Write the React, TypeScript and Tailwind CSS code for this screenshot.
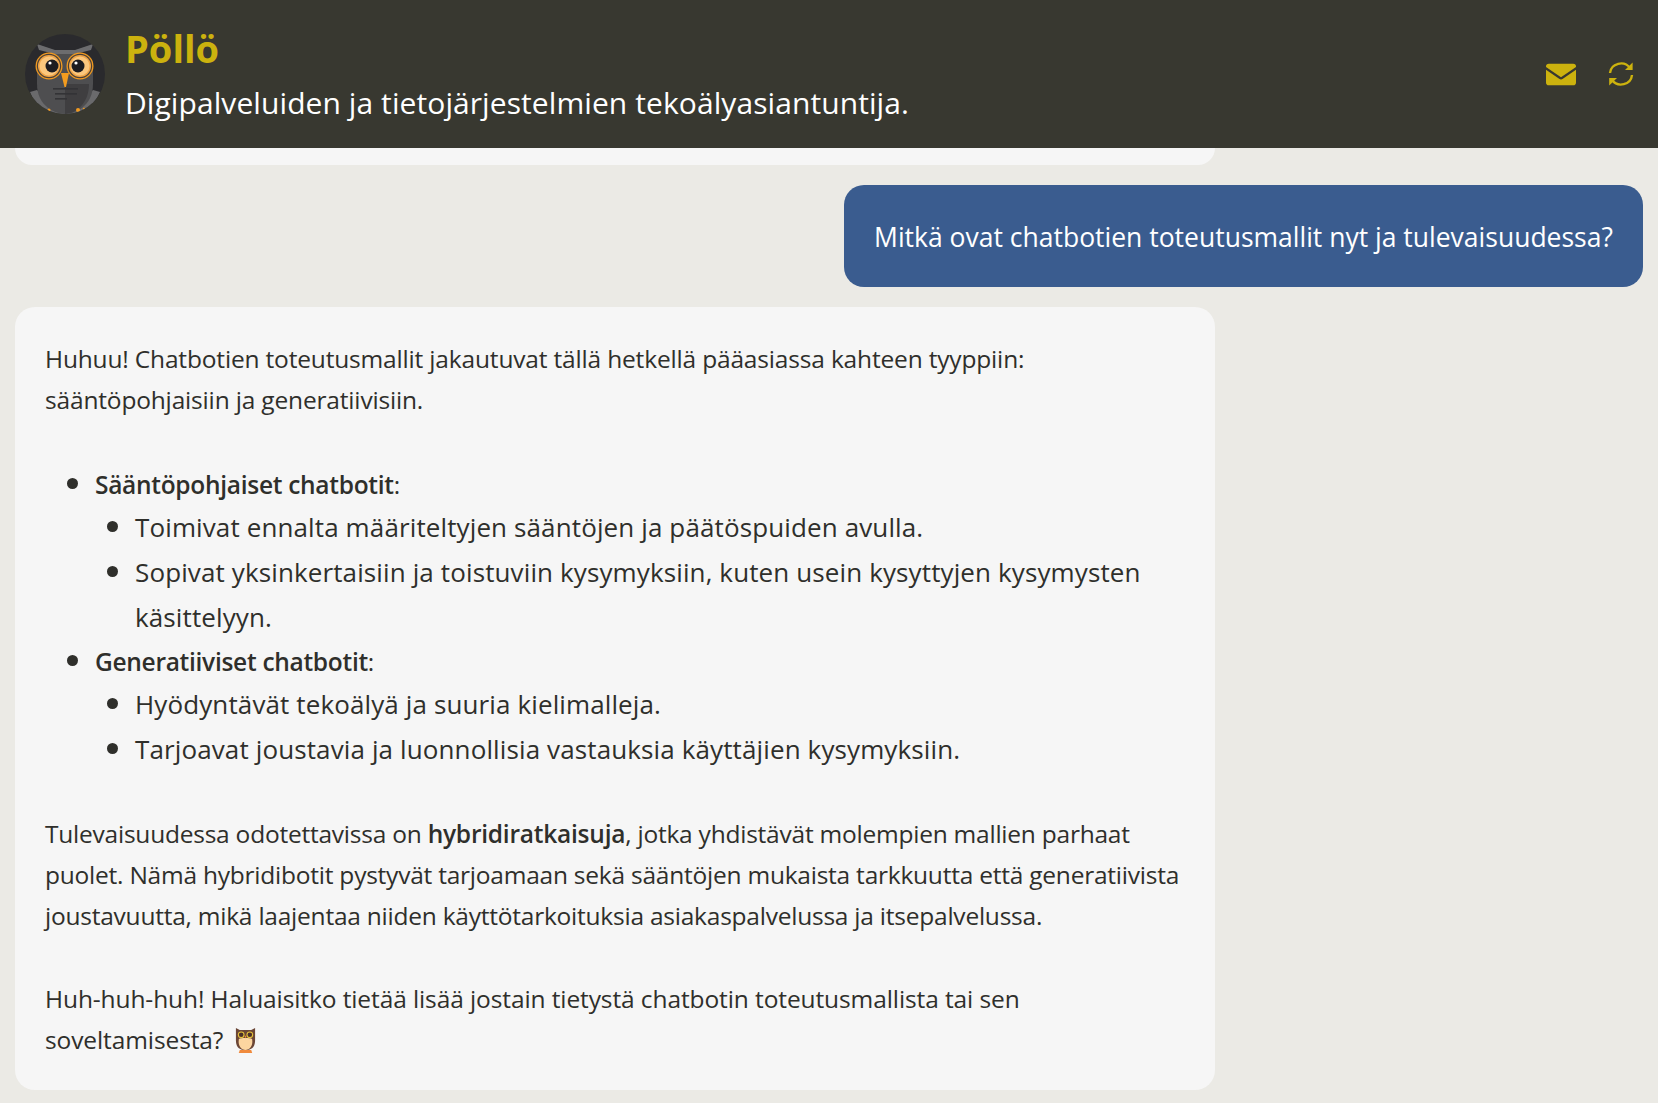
import React from "react";

const Avatar = () => (
  <svg viewBox="0 0 80 80" className="w-20 h-20 shrink-0">
    <defs>
      <clipPath id="c"><circle cx="40" cy="40" r="40" /></clipPath>
    </defs>
    <g clipPath="url(#c)">
      <rect width="80" height="80" fill="#2a2a2d" />
      <path d="M5 58 L14 78 L14 80 L66 80 L66 76 L75 58 L68 56 L60 64 L20 64 L12 56Z" fill="#6a6a6c" />
      <path d="M12 30 C12 12 68 12 68 30 L68 50 C68 72 50 80 40 80 C30 80 12 72 12 50Z" fill="#4e4e50" />
      <path d="M40 50 L64 50 C64 70 50 80 40 80Z" fill="#3f3e40" />
      <path d="M12 10 L30 16 L50 16 L68 10 L66 16 L50 20 L30 20 L14 16Z" fill="#6c6c6e" />
      <circle cx="24" cy="32" r="13.5" fill="#f29a1f" />
      <circle cx="24" cy="32" r="12.2" fill="#4a4038" />
      <circle cx="24" cy="32" r="11" fill="#f0a548" />
      <circle cx="24" cy="32" r="9.5" fill="#fbc77d" />
      <circle cx="55" cy="32" r="13.5" fill="#f29a1f" />
      <circle cx="55" cy="32" r="12.2" fill="#4a4038" />
      <circle cx="55" cy="32" r="11" fill="#f0a548" />
      <circle cx="55" cy="32" r="9.5" fill="#fbc77d" />
      <circle cx="27" cy="32" r="6.5" fill="#1d1c20" />
      <circle cx="53" cy="32" r="6.5" fill="#1d1c20" />
      <circle cx="25" cy="29" r="1.6" fill="#fff" />
      <circle cx="51" cy="29" r="1.6" fill="#fff" />
      <path d="M36 39 L44 39 L41 53 L39.5 53Z" fill="#f39c1f" />
      <rect x="28" y="54" width="25" height="1.6" fill="#333336" />
      <rect x="30" y="59" width="22" height="1.6" fill="#333336" />
      <rect x="30" y="64" width="12" height="1.6" fill="#333336" />
      <circle cx="24" cy="76" r="1.5" fill="#f29a1f" />
      <circle cx="53" cy="76" r="2" fill="#f29a1f" />
      <circle cx="59" cy="75" r="1.2" fill="#f29a1f" />
    </g>
  </svg>
);

const Mail = () => (
  <svg viewBox="0 0 32 24" className="w-[30px] h-[23px]">
    <path d="M3 0.5 H29 A3 3 0 0 1 32 3.5 V4 L16 15 L0 4 V3.5 A3 3 0 0 1 3 0.5Z" fill="#ccb20e" />
    <path d="M0 7 L14 16.5 Q16 18 18 16.5 L32 7 V20.5 A3 3 0 0 1 29 23.5 H3 A3 3 0 0 1 0 20.5Z" fill="#ccb20e" />
  </svg>
);

const Refresh = () => (
  <svg viewBox="0 0 26 26" className="w-[26px] h-[26px]" fill="none" stroke="#ccb20e" strokeWidth="2.4">
    <path d="M2 12 A11 10.5 0 0 1 22 7" />
    <path d="M24 14 A11 10.5 0 0 1 4 19" />
    <path d="M24.6 1.5 V9 H17 Z" fill="#ccb20e" stroke="none" />
    <path d="M1.2 24.5 V17 H9 Z" fill="#ccb20e" stroke="none" />
  </svg>
);

const OwlEmoji = () => (
  <svg viewBox="0 0 24 28" className="inline-block w-[23px] h-[27px] align-[-5px] ml-[11px]">
    <path d="M2 1 L6 3 H18 L22 1 L22 14 C22 22 17 24 12 24 C7 24 2 22 2 14Z" fill="#6b4636" />
    <path d="M5 13 C5 11 19 11 19 13 C20 20 16 24 12 24 C8 24 4 20 5 13Z" fill="#fdd6a0" />
    <circle cx="7.5" cy="8" r="3.5" fill="#e8c33a" />
    <circle cx="16.5" cy="8" r="3.5" fill="#e8c33a" />
    <circle cx="7.5" cy="8" r="2.4" fill="#4b3029" />
    <circle cx="16.5" cy="8" r="2.4" fill="#4b3029" />
    <path d="M11 9 H13 L12 12Z" fill="#f08a3c" />
    <path d="M6 24 H18 L19 27 H5Z" fill="#f08a3c" />
  </svg>
);

const Top = ({ title, items }: { title: string; items: string[] }) => (
  <li className="list-disc marker:text-[30px] text-[24.5px] leading-[37.5px] tracking-[-0.29px] not-first:mt-[2px]">
    <div>
      <strong className="font-semibold">{title}</strong>:
    </div>
    <ul className="pl-[40px]">
      {items.map((t) => (
        <li key={t} className="list-disc text-[26px] leading-[44.6px] tracking-[0.12px]">
          {t}
        </li>
      ))}
    </ul>
  </li>
);

export default function App() {
  return (
    <div
      className="h-screen overflow-hidden flex flex-col bg-[#ebeae5] text-[#2f2f2b]"
      style={{ fontFamily: '"Open Sans", "Noto Sans", sans-serif' }}
    >
      <header className="h-[148px] shrink-0 bg-[#383830] flex items-center pl-[25px] pr-[24px]">
        <Avatar />
        <div className="ml-[20px] flex-1 pt-[2px]">
          <div className="text-[38px] leading-[48px] font-bold text-[#ccb20e]">Pöllö</div>
          <div className="text-[30px] leading-[48px] text-white tracking-[0.08px] mt-[7px]">
            Digipalveluiden ja tietojärjestelmien tekoälyasiantuntija.
          </div>
        </div>
        <div className="flex items-center gap-[32px]">
          <Mail />
          <Refresh />
        </div>
      </header>

      <main className="flex-1 flex flex-col px-[15px]">
        <div className="h-[17px] w-[1200px] bg-[#f6f6f6] rounded-b-[20px]" />
        <div className="self-end mt-[20px] h-[102px] w-[799px] rounded-[20px] bg-[#3a5c8f] text-white flex items-center justify-center text-[26.5px] pt-[4px] whitespace-nowrap">
          Mitkä ovat chatbotien toteutusmallit nyt ja tulevaisuudessa?
        </div>
        <div className="mt-[20px] w-[1200px] h-[783px] rounded-[20px] bg-[#f6f6f6] px-[30px] pt-[31px] text-[24.5px] leading-[41px]">
          <p className="tracking-[-0.17px]">
            Huhuu! Chatbotien toteutusmallit jakautuvat tällä hetkellä pääasiassa kahteen tyyppiin:
            <br />
            sääntöpohjaisiin ja generatiivisiin.
          </p>
          <ul className="mt-[44px] pl-[50px]">
            <Top
              title="Sääntöpohjaiset chatbotit"
              items={[
                "Toimivat ennalta määriteltyjen sääntöjen ja päätöspuiden avulla.",
                "Sopivat yksinkertaisiin ja toistuviin kysymyksiin, kuten usein kysyttyjen kysymysten käsittelyyn.",
              ]}
            />
            <Top
              title="Generatiiviset chatbotit"
              items={[
                "Hyödyntävät tekoälyä ja suuria kielimalleja.",
                "Tarjoavat joustavia ja luonnollisia vastauksia käyttäjien kysymyksiin.",
              ]}
            />
          </ul>
          <p className="mt-[41px] tracking-[-0.23px]">
            Tulevaisuudessa odotettavissa on <strong className="font-semibold">hybridiratkaisuja</strong>, jotka yhdistävät molempien mallien parhaat puolet. Nämä hybridibotit pystyvät tarjoamaan sekä sääntöjen mukaista tarkkuutta että generatiivista joustavuutta, mikä laajentaa niiden käyttötarkoituksia asiakaspalvelussa ja itsepalvelussa.
          </p>
          <p className="mt-[42px] tracking-[-0.1px]">
            Huh-huh-huh! Haluaisitko tietää lisää jostain tietystä chatbotin toteutusmallista tai sen soveltamisesta?
            <OwlEmoji />
          </p>
        </div>
      </main>
    </div>
  );
}
